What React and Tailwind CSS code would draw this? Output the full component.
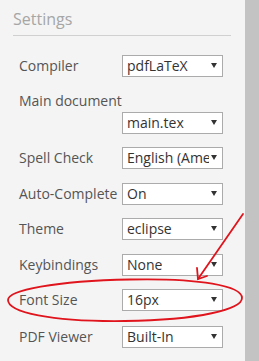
import React from 'react';

const Select = ({ value }) => (
  <div className="flex h-[22px] w-[101px] items-center justify-between overflow-hidden border border-[#ababab] bg-white pl-[4px] pr-[5px] text-[14px] leading-[20px] text-[#333]">
    <span className="overflow-hidden whitespace-nowrap">{value}</span>
    <svg width="6" height="5" viewBox="0 0 6 5" className="ml-[2px] shrink-0 -translate-y-[1px]">
      <path d="M0 0 L6 0 L3 5 Z" fill="#333" />
    </svg>
  </div>
);

const Row = ({ label, value, className = '' }) => (
  <div className={`flex items-center ${className}`}>
    <div className="w-[103px] whitespace-nowrap text-[14px] leading-[20px] text-[#555]">{label}</div>
    <Select value={value} />
  </div>
);

const App = () => {
  return (
    <div
      className="relative flex h-[361px] w-[259px] overflow-hidden bg-[#f4f4f4]"
      style={{ fontFamily: '"Open Sans", sans-serif' }}
    >
      <div className="ml-[13px] mr-[14px] flex-1">
        <div className="h-[36px] border-b border-[#d0d0d0] pt-[7px] text-[16px] leading-[24px] text-[#a6a6a6]">
          Settings
        </div>
        <div className="pl-[6px] pr-[8px]">
          <Row label="Compiler" value="pdfLaTeX" className="mt-[19px]" />
          <div className="mt-[14px] whitespace-nowrap text-[14px] leading-[20px] text-[#555]">Main document</div>
          <Row label="" value="main.tex" className="mt-[1px]" />
          <Row label="Spell Check" value="English (American)" className="mt-[13px]" />
          <Row label="Auto-Complete" value="On" className="mt-[14px]" />
          <Row label="Theme" value="eclipse" className="mt-[13px]" />
          <Row label="Keybindings" value="None" className="mt-[14px]" />
          <Row label="Font Size" value="16px" className="mt-[13px]" />
          <Row label="PDF Viewer" value="Built-In" className="mt-[15px]" />
        </div>
      </div>
      <div className="w-[14px] bg-[#c3c3c3]" />

      <svg
        className="pointer-events-none absolute left-0 top-0"
        width="259"
        height="361"
        viewBox="0 0 259 361"
        fill="none"
        stroke="#e0141c"
        strokeWidth="1.8"
        strokeLinecap="round"
      >
        <path d="M8 300 C 8 290, 55 281, 130 279.5 C 200 278, 242 286, 242 298 C 242 309, 200 320, 125 321 C 50 322, 8 312, 8 300 Z" />
        <path d="M243 214 L198 279" />
        <path d="M197 268 L198 279 L207 276" />
      </svg>
    </div>
  );
};

export default App;
